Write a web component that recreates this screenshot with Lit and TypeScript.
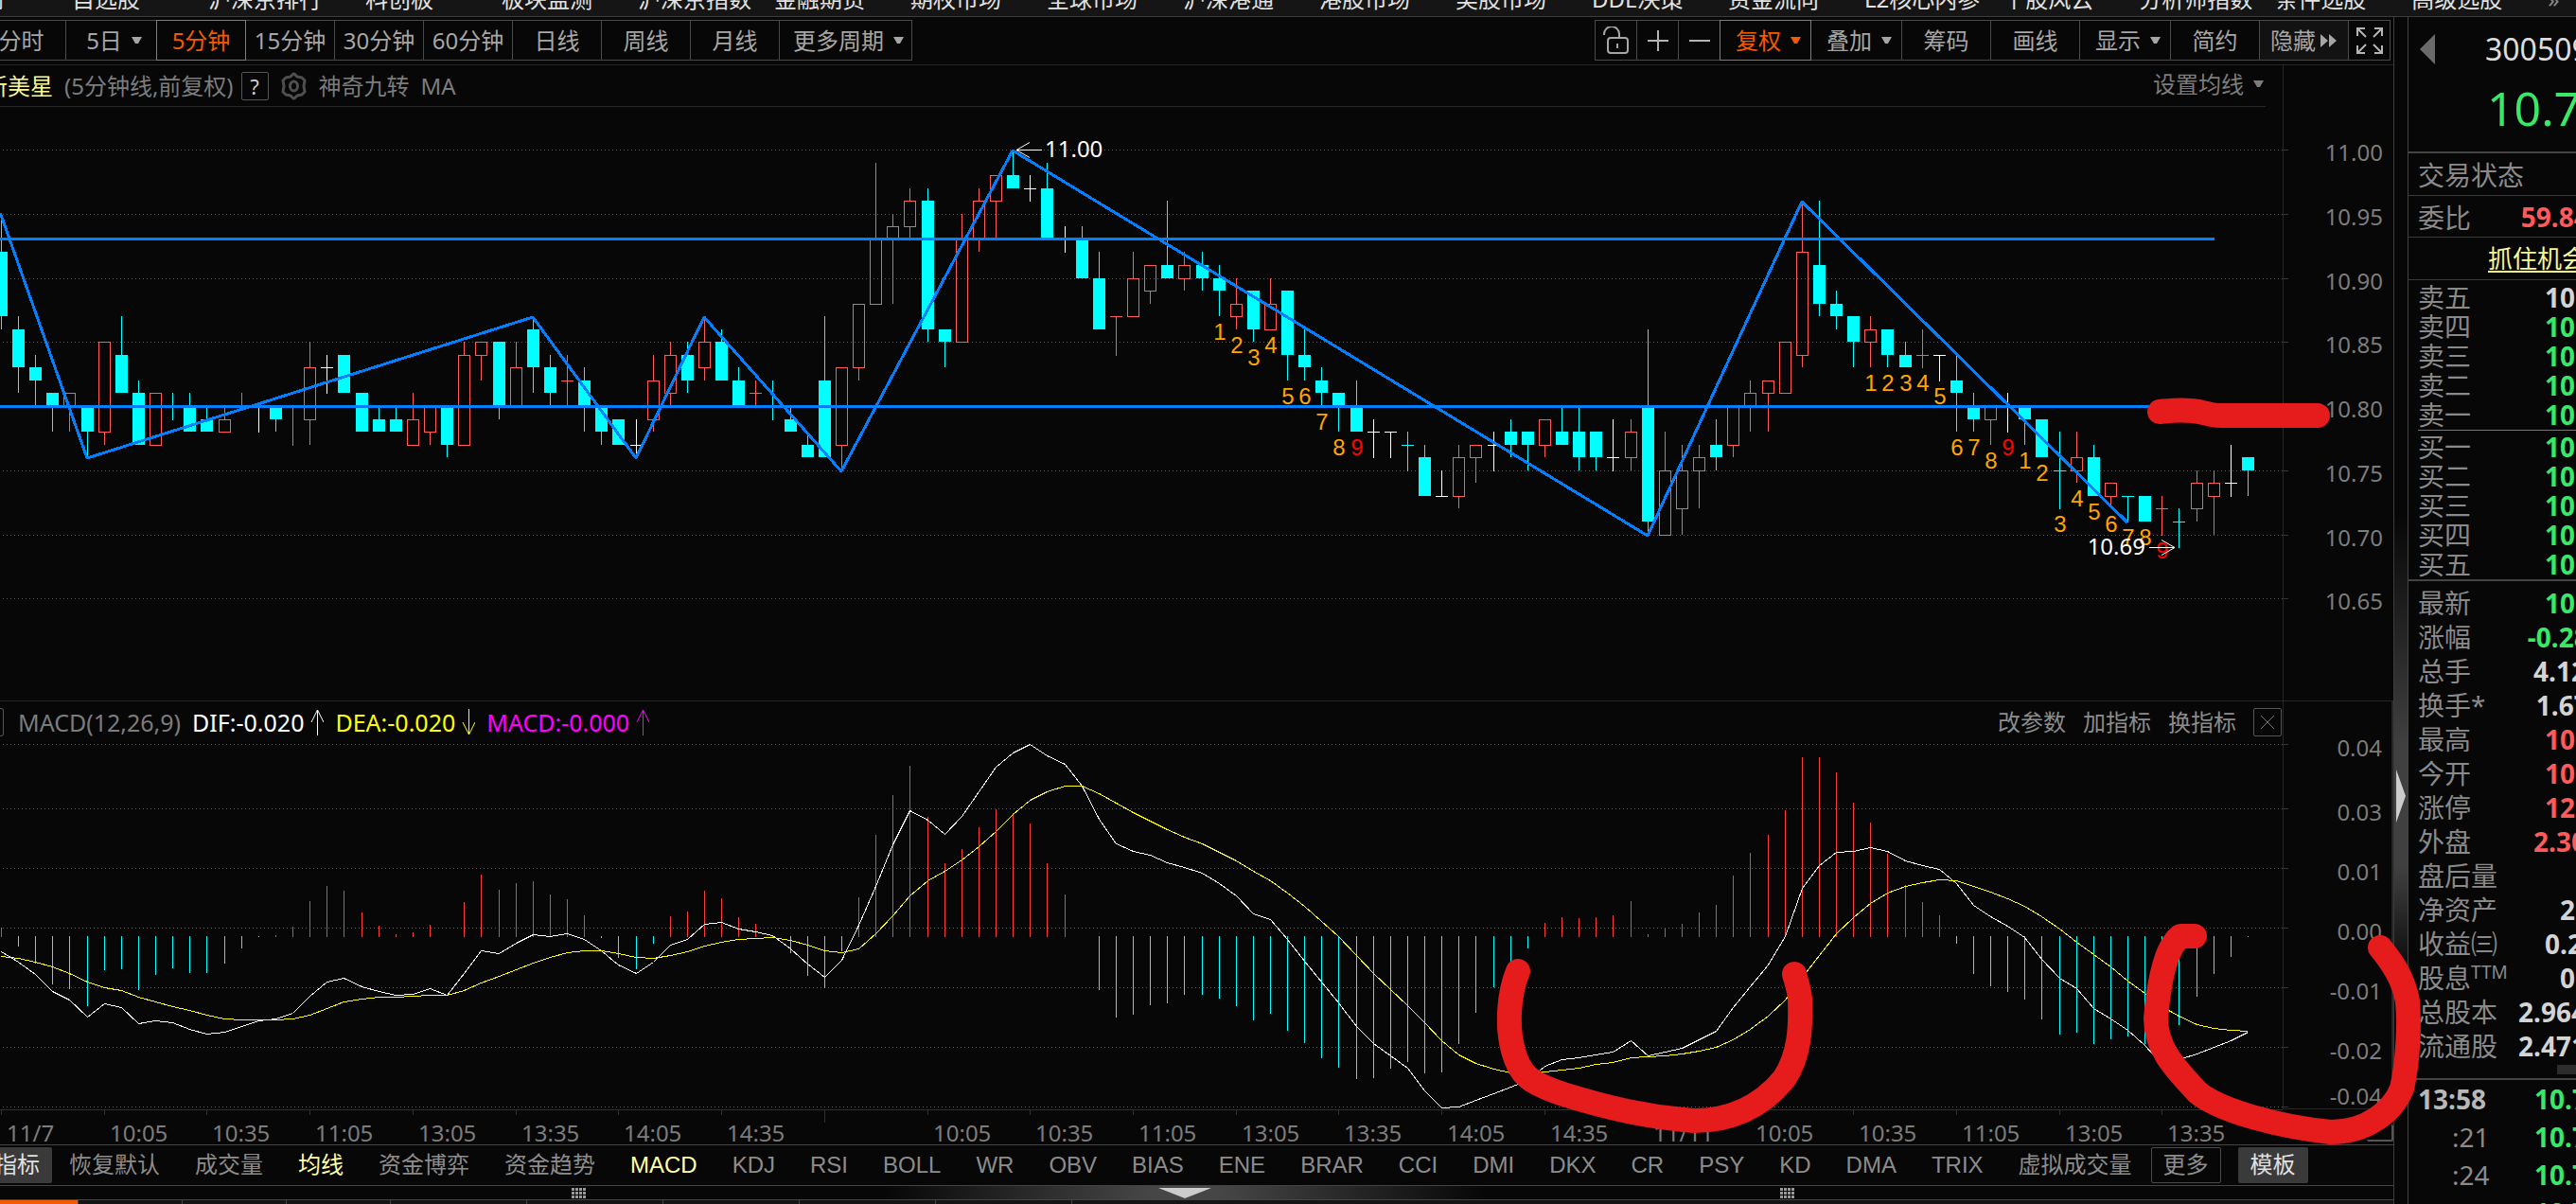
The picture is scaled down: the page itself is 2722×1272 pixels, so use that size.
import { LitElement, html, svg, css, nothing } from "lit";
import { customElement, property, state } from "lit/decorators.js";
import { classMap } from "lit/directives/class-map.js";

type Kind = "c" | "r" | "w";
/* kind, high, body top, body bottom, low: counted in cents below 11.00 */
type Candle = [Kind, number, number, number, number];

const CANDLES: Candle[] = [
  ["c", 5, 8, 13, 14], ["c", 13, 14, 17, 19], ["c", 16, 17, 18, 20], ["c", 19, 19, 20, 22],
  ["r", 19, 19, 20, 22], ["c", 20, 20, 22, 24], ["r", 15, 15, 22, 23], ["c", 13, 16, 19, 19],
  ["c", 18, 19, 23, 23], ["r", 19, 19, 23, 23], ["c", 19, 20, 20, 21], ["c", 19, 20, 22, 22],
  ["c", 20, 21, 22, 22], ["r", 20, 21, 22, 22], ["r", 19, 20, 20, 20], ["w", 20, 20, 20, 22],
  ["c", 20, 20, 21, 22], ["r", 20, 20, 20, 23], ["r", 15, 17, 21, 23], ["w", 16, 17, 17, 19],
  ["c", 16, 16, 19, 19], ["c", 19, 19, 22, 22], ["c", 20, 21, 22, 22], ["c", 20, 21, 22, 22],
  ["r", 19, 21, 23, 23], ["r", 20, 20, 22, 23], ["c", 20, 20, 23, 24], ["r", 15, 16, 23, 23],
  ["r", 15, 15, 16, 18], ["c", 15, 15, 20, 21], ["r", 15, 17, 20, 20], ["c", 13, 14, 17, 19],
  ["c", 16, 17, 19, 20], ["r", 16, 18, 18, 20], ["c", 17, 18, 20, 22], ["c", 20, 20, 22, 23],
  ["c", 21, 21, 23, 23], ["w", 21, 23, 23, 24], ["r", 16, 18, 21, 22], ["r", 15, 16, 19, 20],
  ["c", 15, 16, 18, 19], ["r", 13, 15, 17, 18], ["c", 14, 15, 18, 18], ["c", 17, 18, 20, 20],
  ["r", 18, 19, 19, 20], ["c", 18, 20, 20, 21], ["c", 20, 21, 22, 22], ["c", 22, 23, 24, 24],
  ["c", 13, 18, 24, 24], ["r", 17, 17, 23, 25], ["r", 12, 12, 17, 18], ["r", 1, 7, 12, 12],
  ["r", 5, 6, 7, 12], ["r", 3, 4, 6, 7], ["c", 3, 4, 14, 15], ["c", 14, 14, 15, 17],
  ["r", 5, 7, 15, 15], ["r", 3, 4, 7, 8], ["r", 2, 2, 4, 7], ["c", 0, 2, 3, 3],
  ["w", 2, 3, 3, 4], ["c", 1, 3, 7, 7], ["w", 6, 7, 7, 8], ["c", 6, 7, 10, 10],
  ["c", 8, 10, 14, 14], ["r", 13, 13, 13, 16], ["r", 8, 10, 13, 13], ["r", 9, 9, 11, 12],
  ["c", 4, 9, 10, 10], ["r", 8, 9, 10, 11], ["c", 8, 9, 10, 11], ["c", 9, 10, 11, 13],
  ["r", 10, 12, 13, 14], ["c", 11, 11, 14, 15], ["r", 10, 12, 14, 14], ["c", 11, 11, 16, 18],
  ["c", 14, 16, 17, 18], ["c", 17, 18, 19, 20], ["c", 19, 19, 20, 22], ["c", 18, 20, 22, 22],
  ["w", 21, 22, 22, 24], ["w", 22, 22, 22, 24], ["c", 22, 23, 23, 25], ["c", 23, 24, 27, 27],
  ["w", 25, 27, 27, 27], ["r", 23, 24, 27, 28], ["r", 23, 23, 24, 26], ["w", 22, 23, 23, 25],
  ["c", 21, 22, 23, 24], ["c", 22, 22, 23, 25], ["r", 21, 21, 23, 24], ["c", 20, 22, 23, 23],
  ["c", 20, 22, 24, 25], ["c", 22, 22, 24, 25], ["w", 21, 24, 24, 25], ["r", 21, 22, 24, 25],
  ["c", 14, 20, 29, 30], ["r", 22, 25, 30, 30], ["r", 23, 25, 28, 30], ["r", 23, 24, 25, 28],
  ["c", 21, 23, 24, 25], ["r", 20, 20, 23, 24], ["r", 18, 19, 20, 22], ["r", 18, 18, 19, 22],
  ["r", 15, 15, 19, 19], ["r", 4, 8, 16, 17], ["c", 4, 9, 12, 13], ["c", 11, 12, 13, 14],
  ["c", 13, 13, 15, 17], ["r", 13, 14, 15, 17], ["c", 14, 14, 16, 17], ["c", 15, 16, 17, 17],
  ["r", 14, 16, 16, 17], ["w", 16, 16, 16, 18], ["c", 16, 18, 19, 22], ["c", 19, 20, 21, 22],
  ["r", 20, 20, 21, 23], ["w", 19, 20, 20, 22], ["c", 20, 20, 21, 23], ["c", 21, 21, 24, 24],
  ["c", 22, 25, 25, 28], ["r", 22, 24, 25, 26], ["c", 23, 24, 27, 27], ["r", 26, 26, 27, 28],
  ["c", 27, 27, 27, 29], ["c", 27, 27, 29, 29], ["r", 27, 28, 28, 30], ["c", 28, 29, 29, 31],
  ["r", 25, 26, 28, 29], ["r", 25, 26, 27, 30], ["w", 23, 26, 26, 27], ["c", 24, 24, 25, 27],
];

/* bar index, cents below 11.00 */
const ZIGZAG: [number, number][] = [
  [-1, 4], [0, 5], [5, 24], [31, 13], [37, 24], [41, 13], [49, 25], [59, 0], [96, 30], [105, 4], [124, 29],
];
/* first bar of each run of nine counts */
const NINE_RUNS = [71, 109, 118];

/* Oscillator series in plot units: larger is lower, the zero line is 751 */
const ZERO = 751;
const HIST = [
  723, 781, 833, 897, 911, 963, 853, 851, 914, 868, 848, 862, 862, 833, 787, 753, 746, 720, 642, 596, 610, 677,
  717, 743, 738, 715, 751, 645, 561, 608, 587, 581, 622, 636, 686, 756, 816, 851, 772, 689, 674, 610, 634, 691,
  712, 749, 801, 871, 908, 796, 631, 440, 318, 229, 385, 527, 484, 417, 362, 374, 405, 527, 622, 751, 914, 998,
  989, 960, 955, 929, 929, 940, 963, 1007, 987, 1039, 1076, 1122, 1151, 1186, 1183, 1154, 1134, 1169, 1166,
  1079, 984, 906, 840, 787, 709, 691, 694, 691, 686, 642, 743, 726, 712, 677, 654, 564, 495, 440, 365, 203, 203,
  249, 341, 402, 498, 593, 645, 686, 772, 865, 903, 920, 943, 1004, 1050, 1044, 1079, 1065, 1056, 1080, 1060,
  1021, 934, 865, 813, 753,
];
const DIF = [
  797, 828, 865, 917, 943, 995, 956, 965, 1016, 1008, 1012, 1034, 1048, 1042, 1024, 1008, 1001, 984, 932, 889,
  877, 903, 917, 930, 927, 909, 929, 861, 793, 800, 770, 743, 750, 741, 759, 793, 836, 862, 828, 776, 759, 711,
  707, 727, 734, 747, 786, 834, 874, 822, 715, 595, 470, 364, 393, 438, 381, 308, 230, 189, 163, 197, 222, 290,
  390, 466, 490, 501, 525, 537, 556, 588, 626, 679, 698, 758, 825, 889, 953, 1024, 1077, 1114, 1152, 1220, 1274,
  1270, 1251, 1230, 1209, 1188, 1146, 1126, 1120, 1112, 1101, 1067, 1115, 1103, 1090, 1064, 1039, 967, 903, 836,
  750, 602, 532, 493, 488, 476, 490, 519, 531, 543, 588, 653, 689, 718, 753, 819, 877, 909, 969, 1002, 1037,
  1083, 1140, 1125, 1108, 1089, 1067, 1041,
];
const DEA = [
  811, 815, 826, 843, 862, 888, 905, 915, 935, 950, 962, 976, 990, 1001, 1005, 1005, 1005, 1001, 988, 968, 950,
  941, 935, 935, 932, 930, 929, 915, 891, 872, 851, 831, 814, 799, 792, 792, 800, 814, 817, 808, 796, 779, 766,
  759, 754, 753, 760, 774, 793, 799, 786, 742, 687, 625, 580, 551, 515, 474, 427, 376, 332, 307, 290, 290, 312,
  342, 371, 397, 421, 446, 467, 493, 519, 551, 580, 617, 657, 704, 750, 808, 862, 911, 961, 1013, 1067, 1111,
  1137, 1155, 1167, 1169, 1164, 1158, 1150, 1141, 1135, 1121, 1118, 1115, 1109, 1100, 1089, 1065, 1034, 993,
  943, 875, 807, 742, 690, 648, 617, 597, 584, 577, 580, 596, 612, 635, 657, 689, 727, 766, 805, 843, 884, 924,
  962, 993, 1017, 1031, 1037, 1038,
];
const OSC_GRID: [number, string][] = [
  [1, "0.04"], [69, "0.03"], [132, "0.01"], [195, "0.00"], [258, "-0.01"], [321, "-0.02"], [384, "-0.04"],
];
const TIMES: [number, string][] = [
  [0, "11/7"], [6, "10:05"], [12, "10:35"], [18, "11:05"], [24, "13:05"], [30, "13:35"], [36, "14:05"],
  [42, "14:35"], [48, ""], [54, "10:05"], [60, "10:35"], [66, "11:05"], [72, "13:05"], [78, "13:35"],
  [84, "14:05"], [90, "14:35"], [96, "11/11"], [102, "10:05"], [108, "10:35"], [114, "11:05"], [120, "13:05"],
  [126, "13:35"],
];

const COLORS: Record<Kind, string> = { c: "#00ffff", r: "#ff5b5b", w: "#ffffff" };
const BARS_ACROSS = 133.1;
const priceY = (cents: number) => Math.round(45 + cents * 13.55);
const oscY = (v: number) => Math.round(v / 2.893 - 55);

const NAV = [
  "看新闻", "自选股", "沪深京排行", "科创板", "板块监测", "沪深京指数", "金融期货", "期权市场", "全球市场",
  "沪深港通", "港股市场", "美股市场", "DDE决策", "资金流向", "L2核心内参", "个股风云", "分析师指数", "条件选股", "高级选股",
];
const PERIODS: { label: string; menu?: boolean; on?: boolean; wide?: boolean }[] = [
  { label: "分时" }, { label: "5日", menu: true }, { label: "5分钟", on: true }, { label: "15分钟" },
  { label: "30分钟" }, { label: "60分钟" }, { label: "日线" }, { label: "周线" }, { label: "月线" },
  { label: "更多周期", menu: true, wide: true },
];
const TOOLS: { label: string; menu?: boolean; on?: boolean }[] = [
  { label: "复权", menu: true, on: true }, { label: "叠加", menu: true }, { label: "筹码" }, { label: "画线" },
  { label: "显示", menu: true }, { label: "简约" },
];
const INDICATORS = [
  "恢复默认", "成交量", "均线", "资金博弈", "资金趋势", "MACD", "KDJ", "RSI", "BOLL", "WR", "OBV", "BIAS", "ENE",
  "BRAR", "CCI", "DMI", "DKX", "CR", "PSY", "KD", "DMA", "TRIX", "虚拟成交量",
];

const caret = html`<svg class="caret" width="11" height="8" viewBox="0 0 11 8" aria-hidden="true">
  <path d="M0 0H11L7 7H4Z" fill="currentColor"></path>
</svg>`;

@customElement("market-nav")
class MarketNav extends LitElement {
  static styles = css`
    :host { display: block; }
    nav {
      display: flex; align-items: flex-end; gap: 24px; height: 11px; padding-bottom: 6px;
      overflow: hidden; background: #151515; border-bottom: 1px solid #3c3c3c;
    }
    a { flex: none; min-width: 120px; font-size: 24px; line-height: 24px; color: #e2e2e2; text-decoration: none; white-space: nowrap; }
    a:first-child { margin-left: -68px; }
    .gap { margin-left: 22px; }
    .more { color: #888; min-width: 0; }
  `;
  render() {
    return html`<nav>
      ${NAV.map((t) => html`<a href="#" class=${classMap({ gap: t === "科创板" })}>${t}</a>`)}
      <a href="#" class="more">»</a>
    </nav>`;
  }
}

@customElement("chart-toolbar")
class ChartToolbar extends LitElement {
  static styles = css`
    :host { display: block; border-bottom: 1px solid #262626; }
    .bar { display: flex; justify-content: space-between; padding: 3px 4px 4px 0; overflow: hidden; }
    .group { display: flex; }
    .periods { margin-left: -25px; }
    button {
      display: flex; align-items: center; justify-content: center; gap: 10px; flex: none; box-sizing: border-box;
      width: 95px; height: 43px; margin-right: -1px; padding: 0; border: 1px solid #4a4a4a; background: #070707;
      color: #a6a6a6; font: inherit; font-size: 24px; line-height: 32px; white-space: nowrap;
    }
    .menu { width: 97px; padding-left: 6px; }
    .wide { width: 141px; }
    .on { color: #f45a00; border-color: #f45a00; position: relative; }
    .icon { width: 45px; }
    .hide { gap: 5px; background: #121212; }
    svg { flex: none; }
  `;
  render() {
    return html`<div class="bar">
      <div class="group periods">
        ${PERIODS.map((p) => html`<button class=${classMap({ menu: !!p.menu, on: !!p.on, wide: !!p.wide })}>
          ${p.label}${p.menu ? caret : nothing}
        </button>`)}
      </div>
      <div class="group">
        <button class="icon" aria-label="锁定">
          <svg width="28" height="30" viewBox="0 0 28 30" fill="none" stroke="#a6a6a6" stroke-width="2">
            <rect x="5" y="12" width="21" height="16" rx="3"></rect>
            <path d="M1 9V8a8 8 0 0 1 16 0v4M15 18v5"></path>
          </svg>
        </button>
        <button class="icon" aria-label="放大">
          <svg width="24" height="24" viewBox="0 0 24 24" stroke="#b4b4b4" stroke-width="2"><path d="M12 1V23M1 12H23"></path></svg>
        </button>
        <button class="icon" aria-label="缩小">
          <svg width="24" height="24" viewBox="0 0 24 24" stroke="#b4b4b4" stroke-width="2"><path d="M1 12H23"></path></svg>
        </button>
        ${TOOLS.map((p) => html`<button class=${classMap({ menu: !!p.menu, on: !!p.on })}>${p.label}${p.menu ? caret : nothing}</button>`)}
        <button class="hide">隐藏<svg width="18" height="14" viewBox="0 0 18 14" fill="#a6a6a6"><path d="M0 0L8 7L0 14ZM9 0L17 7L9 14Z"></path></svg></button>
        <button class="icon" aria-label="全屏">
          <svg width="28" height="28" viewBox="0 0 28 28" fill="none" stroke="#b4b4b4" stroke-width="2">
            <path d="M1 9V1H9M1 1L10 10M19 1H27V9M27 1L18 10M1 19V27H9M1 27L10 18M27 19V27H19M27 27L18 18"></path>
          </svg>
        </button>
      </div>
    </div>`;
  }
}

@customElement("price-panel")
class PricePanel extends LitElement {
  @property({ type: Number }) pitch = 18;
  static styles = css`
    :host { display: flex; }
    .main { flex: 1; min-width: 0; }
    .axis { flex: none; width: 117px; box-sizing: border-box; border-left: 1px solid #262626; }
    header {
      display: flex; align-items: center; gap: 12px; height: 43px; margin-left: -16px; margin-right: 18px;
      border-bottom: 1px solid #262626; font-size: 24px; line-height: 32px; color: #7c7c7c; white-space: nowrap;
    }
    h1 { margin: 0; font-size: 24px; font-weight: 400; color: #f8f89a; }
    header button { display: flex; align-items: center; gap: 10px; padding: 0; border: 0; background: none; color: inherit; font: inherit; }
    header .help { justify-content: center; box-sizing: border-box; width: 29px; height: 30px; margin-left: -4px; border: 1px solid #555; border-radius: 2px; color: #ccc; font-size: 22px; line-height: 24px; }
    header .set { margin-left: auto; padding: 0 2px 4px 0; }
    svg { display: block; }
    .plot { width: 100%; height: 627px; }
    .scale { width: 100%; height: 671px; }
    text { font-size: 24px; }
    .count { font-family: "Liberation Sans", sans-serif; font-size: 24px; fill: #ffa500; text-anchor: middle; }
    .nine { fill: #ff0000; }
    .mark { fill: #fff; }
    .tick { fill: #7c7c7c; text-anchor: end; }
  `;
  private x(i: number) { return Math.round(1 + i * this.pitch); }
  private candle([kind, high, top, bottom, low]: Candle, i: number) {
    const x = this.x(i);
    const color = COLORS[kind];
    const [h, t, b, l] = [high, top, bottom, low].map(priceY);
    const wick = (a: number, z: number) => a === z ? nothing : svg`<path d="M${x + 0.5} ${a}V${z}" stroke=${color}></path>`;
    if (top === bottom) {
      return svg`<path d="M${x + 0.5} ${h}V${l + (high === low ? 0 : 1)}M${x - 6} ${t + 0.5}H${x + 7}" stroke=${color}></path>`;
    }
    return svg`${wick(h, t)}${wick(b, l)}${kind === "c"
      ? svg`<rect x=${x - 6} y=${t} width="13" height=${b - t} fill=${color}></rect>`
      : svg`<rect x=${x - 5.5} y=${t + 0.5} width="12" height=${b - t} fill="none" stroke=${color}></rect>`}`;
  }
  render() {
    const x = (i: number) => this.x(i);
    const grid = [0, 5, 10, 15, 20, 25, 30, 35];
    return html`
      <div class="main">
        <header>
          <h1>新美星</h1><span>(5分钟线,前复权)</span>
          <button class="help" aria-label="帮助">?</button>
          <svg width="29" height="30" viewBox="0 0 29 30" fill="none" stroke="#4e4e4e" stroke-width="3" stroke-linejoin="round">
            <path d="M11 5L14 2H15L18 5L23 6L26 9L25 15L26 21L23 24L18 25L15 28H14L11 25L6 24L3 21L4 15L3 9L6 6Z"></path>
            <ellipse cx="14.5" cy="15" rx="4" ry="5"></ellipse>
          </svg>
          <span>神奇九转</span><span>MA</span>
          <button class="set">设置均线${caret}</button>
        </header>
        <svg class="plot" role="img" aria-label="K线图">
          <g stroke="#585858" stroke-dasharray="1 3" shape-rendering="crispEdges">
            ${grid.map((k) => svg`<line x1="3" x2="100%" y1=${priceY(k) + 0.5} y2=${priceY(k) + 0.5}></line>`)}
          </g>
          <g shape-rendering="crispEdges">${CANDLES.map((c, i) => this.candle(c, i))}</g>
          <g stroke="#0080ff" stroke-width="3" fill="none" shape-rendering="crispEdges">
            <path d="M0 ${priceY(7) - 0.5}H${x(129) + 1}M0 ${priceY(20) + 0.5}H${x(129) + 1}"></path>
            <polyline stroke-linejoin="round" points=${ZIGZAG.map(([i, k]) => `${x(i)},${priceY(k) + 1}`).join(" ")}></polyline>
          </g>
          ${NINE_RUNS.map((start) => [0, 1, 2, 3, 4, 5, 6, 7, 8].map((n) => svg`
            <text class="count ${n === 8 ? "nine" : ""}" x=${x(start + n) + 1} y=${priceY(CANDLES[start + n][4]) + 25}>${n + 1}</text>`))}
          <g fill="none" stroke="#fff">
            <path d="M${x(59) + 4} 45.5h27m-13 -8l-14 8l14 8"></path>
            <path d="M${x(127) - 4} ${priceY(31) + 0.5}h-27m13 -8l14 8l-14 8"></path>
          </g>
          <text class="mark" x=${x(59) + 34} y="53">11.00</text>
          <text class="mark" x=${x(127) - 35} y=${priceY(31) + 8} text-anchor="end">10.69</text>
        </svg>
      </div>
      <div class="axis">
        <svg class="scale">
          ${grid.map((k) => svg`
            <path d="M0 ${priceY(k) + 44.5}h5" stroke="#333"></path>
            <text class="tick" x="105" y=${priceY(k) + 56}>${(11 - k / 100).toFixed(2)}</text>`)}
        </svg>
      </div>`;
  }
}

const arrow = (up: boolean) => html`<svg width="14" height="28" viewBox="0 0 14 28" fill="none" stroke="currentColor" aria-hidden="true">
  <path d=${up ? "M7.5 28V1M1 14L7.5 1L14 14" : "M7.5 0V27M1 14L7.5 27L14 14"}></path></svg>`;

@customElement("macd-panel")
class MacdPanel extends LitElement {
  @property({ type: Number }) pitch = 18;
  static styles = css`
    :host { display: block; border-top: 1px solid #262626; }
    .row { display: flex; }
    .main { flex: 1; min-width: 0; }
    .axis { flex: none; width: 117px; box-sizing: border-box; border: 1px solid #262626; border-top: 0; border-right-width: 2px; }
    .corner { flex: none; width: 117px; box-sizing: border-box; display: flex; align-items: flex-end; justify-content: flex-end; padding-bottom: 3px; }
    .thumb { width: 26px; height: 16px; border: solid #555; border-width: 0 2px 2px 0; border-radius: 2px; }
    header { display: flex; align-items: center; gap: 12px; height: 44px; padding-right: 1px; font-size: 25px; line-height: 32px; color: #7c7c7c; white-space: nowrap; }
    header button { padding: 0; border: 0; background: none; color: #8c8c8c; font: inherit; font-size: 24px; }
    .edge { width: 3px; height: 28px; margin-right: 3px; border: 1px solid #555; border-left: 0; border-radius: 0 3px 3px 0; }
    .val { display: flex; align-items: center; gap: 7px; }
    .dif { color: #fff; } .dea { color: #ffff00; } .macd { color: #ff00ff; }
    .links { display: flex; align-items: center; gap: 18px; margin-left: auto; }
    header .close { display: flex; align-items: center; justify-content: center; box-sizing: border-box; width: 30px; height: 30px; border: 1px solid #555; border-radius: 2px; }
    svg { display: block; flex: none; }
    .plot { width: 100%; height: 387px; }
    .scale { width: 100%; height: 430px; overflow: hidden; }
    .times { width: 100%; height: 37px; }
    text { font-size: 24px; fill: #7c7c7c; }
    .tick { text-anchor: end; }
  `;
  private x(i: number) { return Math.round(1 + i * this.pitch); }
  render() {
    const x = (i: number) => this.x(i);
    const line = (d: number[]) => d.map((v, i) => `${x(i) + 0.5},${oscY(v) + 0.5}`).join(" ");
    return html`
      <div class="row">
        <div class="main">
          <header>
            <span class="edge"></span><span>MACD(12,26,9)</span>
            <span class="val dif">DIF:-0.020 ${arrow(true)}</span>
            <span class="val dea">DEA:-0.020 ${arrow(false)}</span>
            <span class="val macd">MACD:-0.000 ${arrow(true)}</span>
            <div class="links">
              <button>改参数</button><button>加指标</button><button>换指标</button>
              <button class="close" aria-label="关闭"><svg width="14" height="14" viewBox="0 0 14 14" stroke="#777"><path d="M0 0L14 14M14 0L0 14"></path></svg></button>
            </div>
          </header>
          <svg class="plot" role="img" aria-label="MACD">
            <g stroke="#585858" stroke-dasharray="1 3" shape-rendering="crispEdges">
              ${OSC_GRID.map(([y]) => svg`<line x1="3" x2="100%" y1=${y + 0.5} y2=${y + 0.5}></line>`)}
            </g>
            <g shape-rendering="crispEdges">
              ${HIST.map((v, i) => v === ZERO ? nothing : svg`<path d="M${x(i) + 0.5} ${v > ZERO ? 204 : 205}V${oscY(v)}" stroke=${v > ZERO ? "#00ffff" : "#ff3c3c"}></path>`)}
            </g>
            <g fill="none" shape-rendering="crispEdges">
              <polyline stroke="#fff" points=${line(DIF)}></polyline>
              <polyline stroke="#ffff00" points=${line(DEA)}></polyline>
            </g>
          </svg>
        </div>
        <div class="axis">
          <svg class="scale">
            ${OSC_GRID.map(([y, label], i) => svg`
              <path d="M0 ${y + 44.5}h5" stroke="#333"></path>
              <text class="tick" x="104" y=${i === 6 ? 426 : y + 57}>${label}</text>`)}
          </svg>
        </div>
      </div>
      <div class="row">
        <div class="main">
          <svg class="times">
            <line x1="0" x2="100%" y1="0.5" y2="0.5" stroke="#303030"></line>
            ${TIMES.map(([i, label]) => svg`
              <path d="M${x(i) + 0.5} 0V${label ? 6 : 14}" stroke="#303030"></path>
              <text x=${x(i) + 6} y="34">${label}</text>`)}
          </svg>
        </div>
        <div class="corner"><span class="thumb"></span></div>
      </div>`;
  }
}

@customElement("indicator-tabs")
class IndicatorTabs extends LitElement {
  static styles = css`
    :host { display: block; border-top: 1px solid #444; }
    .tabs { display: flex; align-items: center; gap: 37px; height: 42px; overflow: hidden; }
    button {
      flex: none; box-sizing: border-box; height: 38px; padding: 0; border: 0; background: none; color: #8c8c8c;
      font: inherit; font-family: "Liberation Sans", "Noto Sans CJK SC", sans-serif; font-size: 24px; line-height: 36px; white-space: nowrap;
    }
    .on { color: #ffffa6; }
    .box { width: 74px; border: 1px solid #4a4a4a; border-radius: 2px; margin-left: -17px; }
    .fill { width: 74px; background: #3a3a3a; color: #e0e0e0; border-radius: 2px; margin-left: -19px; }
    .lead { margin-right: -19px; }
    .grips {
      display: grid; grid-template-columns: 604fr 620fr 658fr 648fr; align-items: center; height: 14px;
      border-top: 1px solid #444; background: linear-gradient(90deg, transparent 37%, #464646 48%, #464646 51%, transparent 62%);
    }
    .grips svg:first-child { grid-column: 2; }
    .status { display: flex; height: 4px; border-top: 1px solid #444; background: #151515; }
    .status span { flex: none; width: 143px; border-right: 1px solid #444; }
    .status span:first-child { width: 82px; background: #f45a00; }
    .status .short { width: 109px; }
  `;
  render() {
    const grip = html`<svg width="17" height="11" viewBox="0 0 17 11" fill="#999">
      ${[0, 1, 2].map((r) => [0, 1, 2, 3].map((c) => svg`<rect x=${c * 4} y=${r * 4} width="3" height="3"></rect>`))}
    </svg>`;
    return html`
      <div class="tabs">
        <button class="fill lead">指标</button>
        ${INDICATORS.map((t) => html`<button class=${classMap({ on: t === "MACD" || t === "均线" })}>${t}</button>`)}
        <button class="box">更多</button><button class="fill">模板</button>
      </div>
      <div class="grips">${grip}
        <svg width="56" height="11" viewBox="0 0 56 11"><path d="M0 0H56L28 11Z" fill="#ccc"></path></svg>
        ${grip}
      </div>
      <div class="status">${[0, 1, 2, 3, 4, 5, 6, 7, 8].map((i) => html`<span class=${i > 0 && i < 4 ? "short" : ""}></span>`)}</div>`;
  }
}

type Quote = [string, string, string?];
const ASKS: Quote[] = [["卖五", "10.78", "flat"], ["卖四", "10.77"], ["卖三", "10.76"], ["卖二", "10.75"], ["卖一", "10.74"]];
const BIDS: Quote[] = [["买一", "10.73"], ["买二", "10.72"], ["买三", "10.71"], ["买四", "10.70"], ["买五", "10.69"]];
const STATS: Quote[] = [
  ["最新", "10.75"], ["涨幅", "-0.28%"], ["总手", "4.12万", "flat"], ["换手*", "1.67%", "flat"], ["最高", "10.83", "up"],
  ["今开", "10.79", "up"], ["涨停", "12.94", "up"], ["外盘", "2.30万", "up"], ["盘后量", "", "flat"],
  ["净资产", "2.41", "flat"], ["收益㈢", "0.218", "flat"], ["股息", "0.47", "flat"], ["总股本", "2.964亿", "flat"],
  ["流通股", "2.471亿", "flat"],
];
const TICKS: Quote[] = [["13:58", "10.75", "lead"], [":21", "10.75"], [":24", "10.75"], [":27", "10.75"]];

@customElement("quote-sidebar")
class QuoteSidebar extends LitElement {
  static styles = css`
    :host { display: block; flex: none; width: 178px; box-sizing: border-box; overflow: hidden; border-left: 1px solid #444; font-size: 28px; color: #8a8a8a; white-space: nowrap; }
    .head { display: grid; grid-template-columns: 81px auto; grid-template-rows: 64px 60px; align-items: center; height: 144px; padding-top: 2px; border-bottom: 2px solid #444; box-sizing: border-box; }
    .head button { display: flex; padding: 0 0 0 12px; border: 0; background: none; }
    .code { font-size: 32px; line-height: 40px; color: #dcdcdc; }
    .price { grid-column: 2; font-size: 50px; line-height: 60px; color: #3ae868; padding-left: 2px; }
    .state, .ratio, .promo { display: flex; align-items: center; height: 44px; padding-left: 10px; border-bottom: 1px solid #3a3a3a; box-sizing: border-box; width: 216px; }
    .state { height: 45px; }
    .ratio { justify-content: space-between; }
    .promo { height: 45px; padding-left: 84px; }
    .promo a { font-size: 26px; line-height: 30px; color: #f8f89a; text-underline-offset: 3px; }
    b { color: #ff5a5a; }
    table { width: 216px; border-collapse: collapse; }
    th { padding: 0 0 0 10px; text-align: left; font-weight: 400; }
    td { padding: 0; text-align: right; font-weight: 700; color: #3ae868; }
    .book th, .book td { height: 31px; line-height: 31px; }
    .asks { margin-top: 3px; }
    .mid { margin: 0 0 2px 10px; border-top: 1px solid #777; }
    .stats { border-top: 2px solid #444; border-bottom: 2px solid #444; }
    .stats table { margin-top: 5px; }
    .stats th, .stats td { height: 36px; line-height: 36px; }
    .flat { color: #d4d4d4; } .up { color: #ff5a5a; }
    sup { font-size: 19px; line-height: 19px; vertical-align: 10px; }
    .scroll { width: 40px; height: 10px; margin: 2px 0 4px 157px; background: #2c2c2c; }
    .ticks th, .ticks td { height: 40px; line-height: 40px; }
    .ticks { width: 205px; }
    .ticks th { padding-left: 46px; }
    .ticks .lead { padding-left: 10px; font-weight: 700; color: #b8b8b8; }
  `;
  private rows(list: Quote[]) {
    return list.map(([k, v, c]) => html`<tr>
      <th scope="row" class=${c === "lead" ? "lead" : ""}>${k}${k === "股息" ? html`<sup>TTM</sup>` : nothing}</th>
      <td class=${c === "flat" || c === "up" ? c : ""}>${v}</td></tr>`);
  }
  render() {
    return html`
      <div class="head">
        <button aria-label="上一个"><svg width="16" height="32" viewBox="0 0 16 32"><path d="M16 0V32L0 16Z" fill="#6a6a6a"></path></svg></button>
        <span class="code">300509</span><span class="price">10.75</span>
      </div>
      <div class="state">交易状态</div>
      <div class="ratio"><span>委比</span><b>59.84%</b></div>
      <div class="promo"><a href="#">抓住机会</a></div>
      <table class="book asks">${this.rows(ASKS)}</table>
      <div class="mid"></div>
      <table class="book">${this.rows(BIDS)}</table>
      <div class="stats"><table>${this.rows(STATS)}</table><div class="scroll"></div></div>
      <table class="ticks">${this.rows(TICKS)}</table>`;
  }
}

@customElement("app-root")
class AppRoot extends LitElement {
  @state() private pitch = 18.12;
  private observer?: ResizeObserver;
  static styles = css`
    :host { display: block; position: relative; height: 100vh; overflow: hidden; background: #070707; font-family: "Noto Sans", "Noto Sans CJK SC", sans-serif; }
    .page { display: flex; min-width: 0; }
    .work { flex: 1; min-width: 0; border-right: 1px solid #3c3c3c; overflow: hidden; }
    .split { flex: none; width: 14px; box-sizing: border-box; padding: 795px 0 0 2px; background: linear-gradient(180deg, transparent 41%, #404040 60%, #404040 70%, transparent 79%); }
    .pen { position: absolute; left: 0; top: 0; width: 100%; height: 100%; pointer-events: none; }
  `;
  connectedCallback() {
    super.connectedCallback();
    this.observer = new ResizeObserver(() => this.measure());
    this.observer.observe(this);
  }
  disconnectedCallback() {
    this.observer?.disconnect();
    super.disconnectedCallback();
  }
  private measure() {
    this.pitch = Math.max(6, (this.clientWidth - 310) / BARS_ACROSS);
  }
  render() {
    return html`
      <market-nav></market-nav>
      <div class="page">
        <div class="work">
          <chart-toolbar></chart-toolbar>
          <price-panel .pitch=${this.pitch}></price-panel>
          <macd-panel .pitch=${this.pitch}></macd-panel>
          <indicator-tabs></indicator-tabs>
        </div>
        <div class="split"><svg width="10" height="56" viewBox="0 0 10 56"><path d="M0 0L10 28L0 56Z" fill="#ccc"></path></svg></div>
        <quote-sidebar></quote-sidebar>
      </div>
      <svg class="pen" viewBox="0 0 2722 1272" preserveAspectRatio="xMinYMin meet" fill="none" stroke="#e61c1c" stroke-width="26" stroke-linecap="round" stroke-linejoin="round" aria-hidden="true">
        <path d="M2282 435C2300 433 2316 433 2328 436S2342 439 2352 439L2449 439"></path>
        <path d="M1604 1026C1594 1050 1592 1085 1599 1110C1606 1136 1616 1144 1652 1156C1700 1171 1740 1180 1790 1184C1836 1184 1866 1163 1885 1140C1902 1115 1903 1085 1902 1055C1901 1045 1899 1040 1896 1029"></path>
        <path d="M2319 989L2304 989C2290 1000 2282 1030 2278 1076C2278 1110 2302 1132 2322 1154C2345 1173 2405 1190 2463 1196C2500 1196 2528 1175 2538 1150C2545 1120 2546 1080 2544 1058C2540 1035 2529 1018 2515 1001"></path>
      </svg>`;
  }
}
